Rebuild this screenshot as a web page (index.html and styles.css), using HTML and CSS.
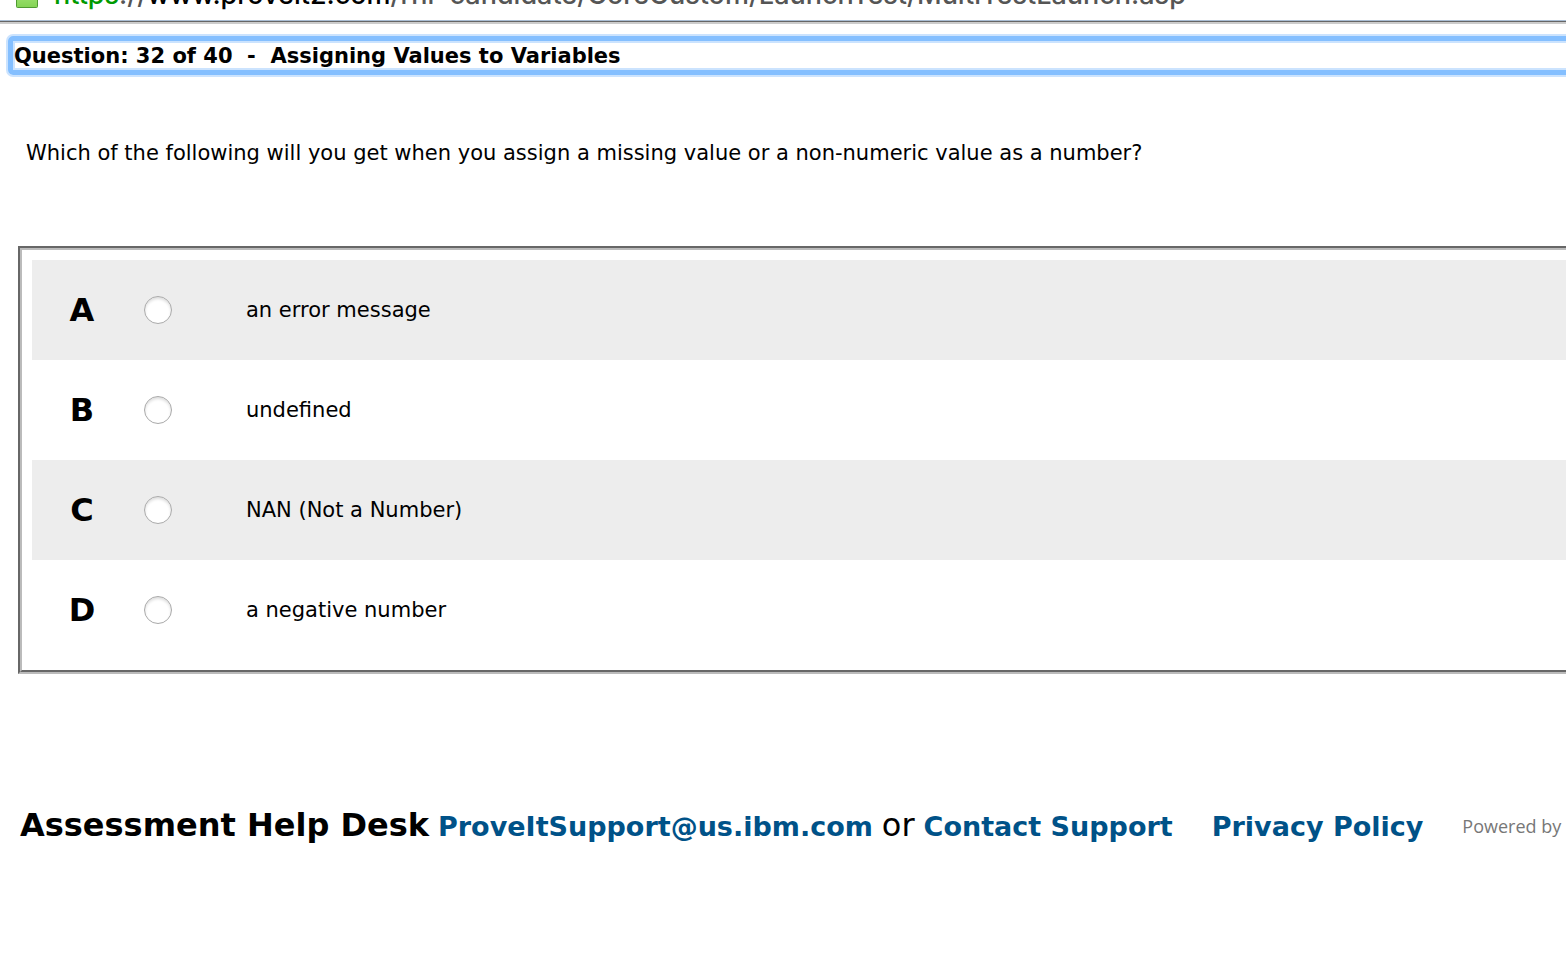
FILE: index.html
```html
<!DOCTYPE html>
<html lang="en">
<head>
<meta charset="utf-8">
<title>Assigning Values to Variables</title>
<link rel="stylesheet" href="styles.css">
</head>
<body>
<header class="address-bar">
  <svg class="lock" width="22" height="28" viewBox="0 0 22 28" aria-hidden="true">
    <defs><linearGradient id="lock-fill" x1="0" y1="0" x2="0" y2="1"><stop offset="0" stop-color="#a4e478"/><stop offset="1" stop-color="#84d455"/></linearGradient></defs>
    <path d="M5 12V7a6 6 0 0 1 12 0v5" fill="none" stroke="#777" stroke-width="3"/>
    <rect x="0.500" y="11.500" width="21" height="16" rx="1" fill="url(#lock-fill)" stroke="#4f9a32"/>
  </svg>
  <p class="url"><span class="scheme">https</span>://<span class="host">www.proveit2.com</span>/rnr-candidate/CoreCustom/LaunchTest/MultiTestLaunch.asp</p>
</header>
<main class="page">
  <h1 class="title">Question: 32 of 40 &nbsp;- &nbsp;Assigning Values to Variables</h1>
  <p class="question" id="question">Which of the following will you get when you assign a missing value or a non-numeric value as a number?</p>
  <div class="answers" role="radiogroup" aria-labelledby="question">
    <label class="answer"><span class="letter">A</span><input class="choice" type="radio" name="answer"><span>an error message</span></label>
    <label class="answer"><span class="letter">B</span><input class="choice" type="radio" name="answer"><span>undefined</span></label>
    <label class="answer"><span class="letter">C</span><input class="choice" type="radio" name="answer"><span>NAN (Not a Number)</span></label>
    <label class="answer"><span class="letter">D</span><input class="choice" type="radio" name="answer"><span>a negative number</span></label>
  </div>
</main>
<footer class="footer">
  <strong class="desk">Assessment Help Desk</strong>
  <a class="link" href="#email">ProveItSupport@us.ibm.com</a>
  <span class="or">or</span>
  <a class="link" href="#contact">Contact Support</a>
  <a class="link policy" href="#privacy">Privacy Policy</a>
  <span class="powered">Powered by</span>
</footer>
</body>
</html>
```
FILE: styles.css
```css
* { box-sizing: border-box; }
body {
  margin: 0;
  background: #fff;
  color: #000;
  font: 21px/26px Verdana, "DejaVu Sans", sans-serif;
  overflow-x: hidden;
}
h1, p { margin: 0; }
.address-bar {
  display: flex;
  align-items: flex-end;
  gap: 16px;
  height: 24px;
  padding: 0 16px 11px;
  border-bottom: 2px solid #ccc;
  box-shadow: inset 0 -1px #666, inset 0 -2px #a9bdd3;
  overflow: hidden;
}
.lock { flex: none; margin-bottom: 3px; }
.url {
  font: 500 27px/32px Inter, "Liberation Sans", sans-serif;
  color: #555;
  white-space: nowrap;
}
.scheme { color: #009a00; }
.host { color: #000; }
.page { padding: 12px 0 0 8px; }
.title {
  margin-right: -16px;
  padding: 3px 1px 1px;
  border: 5px solid #84bfff;
  border-radius: 5px;
  box-shadow: 0 0 0 2px #cbe3fe, inset 0 0 0 2px #cbe3fe;
  font-size: 21px;
  line-height: 25px;
  white-space: nowrap;
}
.question { padding: 65px 18px 0; }
.answers {
  margin: 80px -16px 0 10px;
  padding: 10px;
  border: 4px groove #bbb;
}
.answer {
  display: grid;
  grid-template-columns: 100px 114px 1fr;
  align-items: center;
  height: 100px;
}
.answer:nth-child(odd) { background: #ededed; }
.letter { text-align: center; font-size: 32px; font-weight: bold; }
.choice {
  appearance: none;
  width: 28px;
  height: 28px;
  margin: 0 12px;
  border: 1px solid #aaa;
  border-radius: 50%;
  background: #fff;
  box-shadow: inset 0 2px 3px #ddd;
}
.footer {
  display: flex;
  align-items: baseline;
  gap: 9px;
  padding: 131px 0 0 20px;
  font-size: 32px;
  line-height: 40px;
  white-space: nowrap;
}
.link { color: #005288; font-size: 27px; font-weight: bold; text-decoration: none; }
.policy { margin: 0 30px; }
.powered { align-self: center; color: #777; font: 18px/24px "Open Sans", sans-serif; }
```
